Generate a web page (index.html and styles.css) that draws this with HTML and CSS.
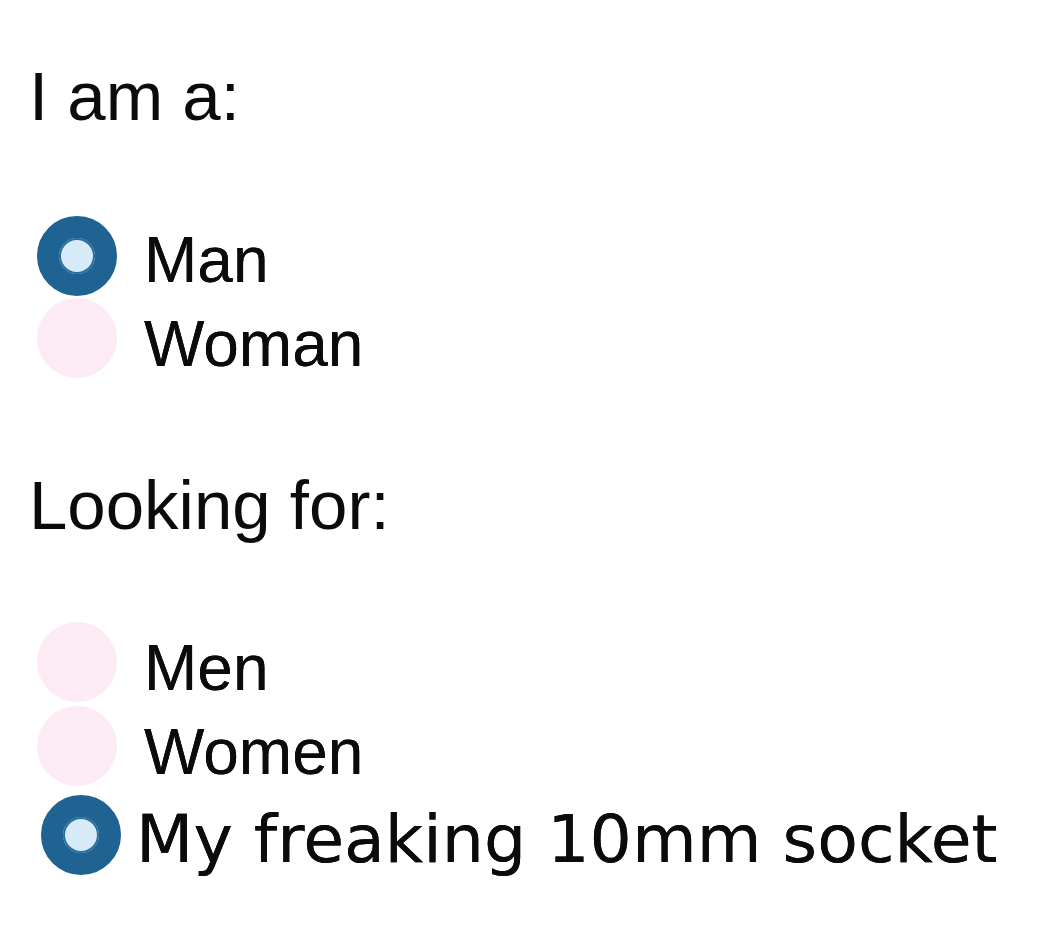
FILE: index.html
```html
<!DOCTYPE html>
<html>
<head>
<meta charset="utf-8">
<link rel="stylesheet" href="styles.css">
</head>
<body>
<div class="form">
  <div class="heading heading-first">I am a:</div>
  <div class="option">
    <span class="radio checked"></span>
    <span class="label">Man</span>
  </div>
  <div class="option">
    <span class="radio"></span>
    <span class="label">Woman</span>
  </div>
  <div class="heading heading-second">Looking for:</div>
  <div class="option">
    <span class="radio"></span>
    <span class="label">Men</span>
  </div>
  <div class="option">
    <span class="radio"></span>
    <span class="label">Women</span>
  </div>
  <div class="option option-socket">
    <span class="radio checked"></span>
    <span class="label label-socket">My freaking 10mm socket</span>
  </div>
</div>
</body>
</html>
```

FILE: styles.css
```css
html, body {
  margin: 0;
  padding: 0;
  background: #ffffff;
}

.form {
  display: flex;
  flex-direction: column;
  padding-top: 57px;
  color: #0b0b0b;
  font-family: "Liberation Sans", Arial, sans-serif;
}

.heading {
  font-size: 69px;
  line-height: 80px;
  height: 80px;
  padding-left: 29px;
}

.heading-first {
  margin-bottom: 84px;
}

.heading-second {
  margin-top: 77px;
  margin-bottom: 83px;
}

.option {
  display: flex;
  align-items: flex-start;
  height: 84px;
  padding-left: 37px;
}

.radio {
  flex: 0 0 auto;
  width: 80px;
  height: 80px;
  margin-top: -7px;
  border-radius: 50%;
  background: #fcebf5;
  box-sizing: border-box;
}

.radio.checked {
  margin-top: -5px;
  background: #d6eaf7;
  border: 22px solid #1e6391;
  box-shadow: inset 0 0 0 2px #2a6e9a;
}

.label {
  margin-left: 27px;
  font-size: 64px;
  line-height: 84px;
  margin-top: -3px;
  text-shadow: 0 0 0.6px #0b0b0b;
}

.option-socket {
  padding-left: 41px;
}

.option-socket .radio {
  margin-top: -2px;
}

.label-socket {
  margin-left: 15px;
  margin-top: 0;
  font-family: "DejaVu Sans", Verdana, sans-serif;
  font-size: 66.5px;
}
```
